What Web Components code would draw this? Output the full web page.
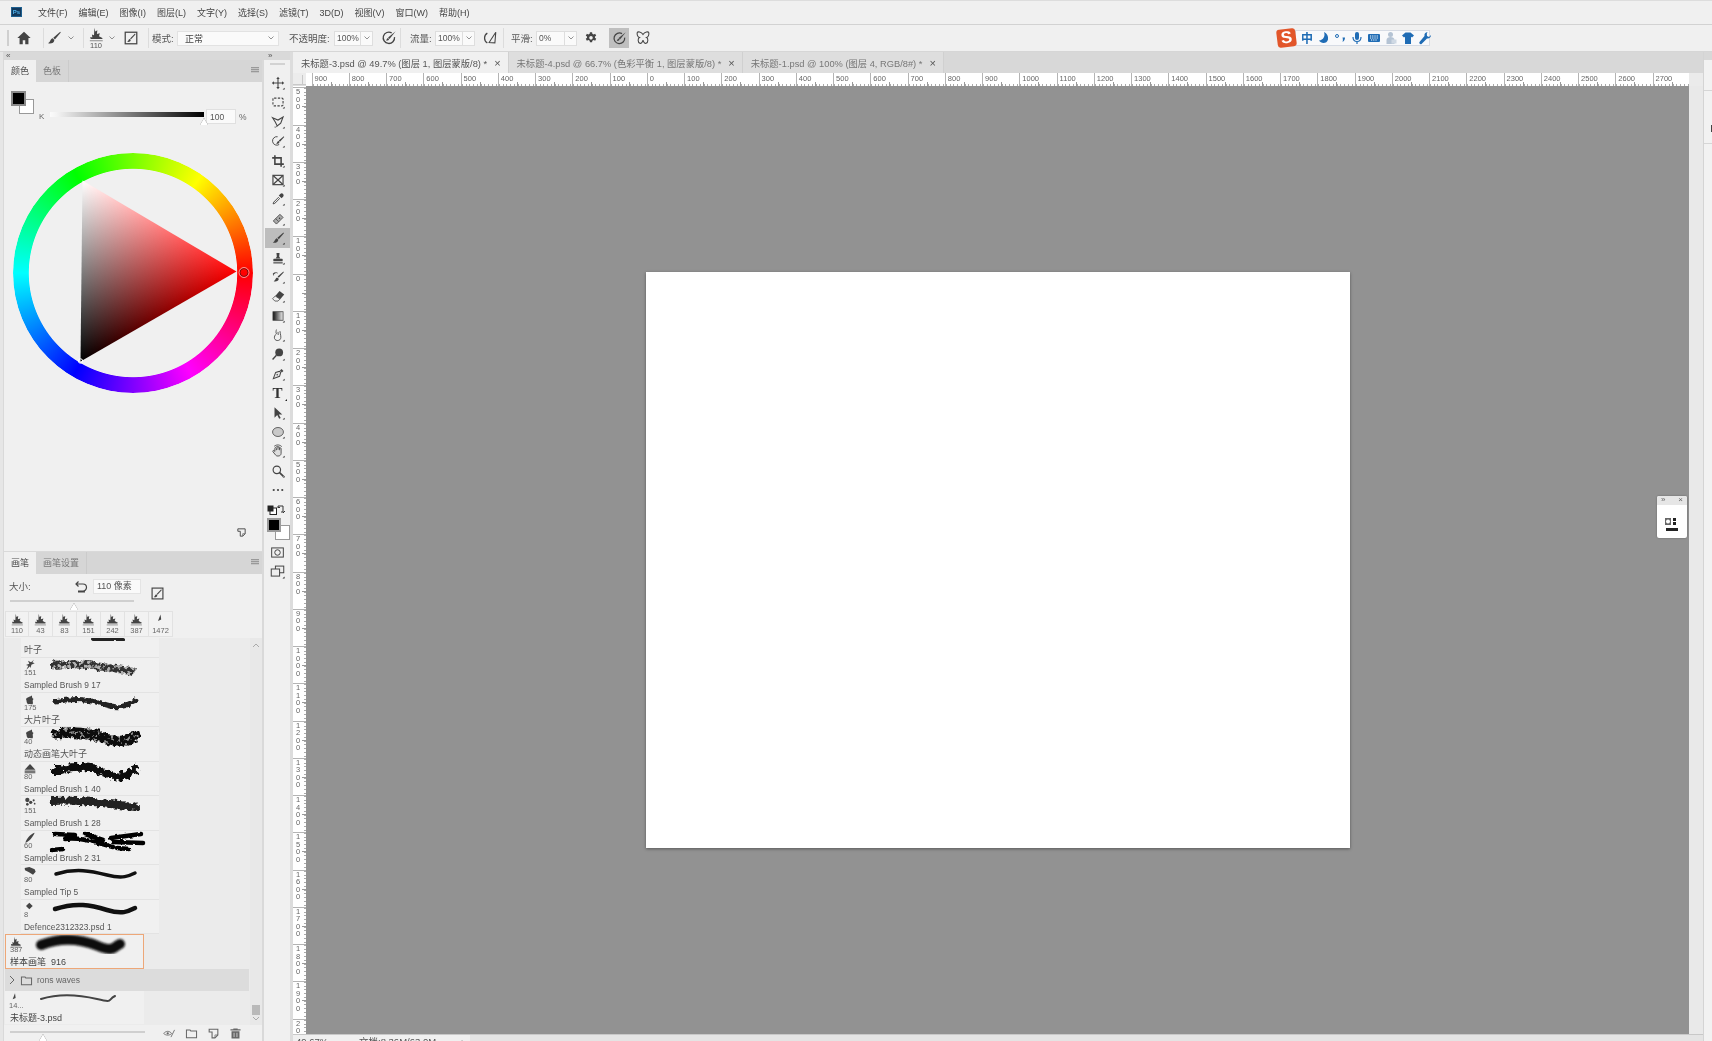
<!DOCTYPE html>
<html lang="zh">
<head>
<meta charset="utf-8">
<title>Photoshop</title>
<style>
    html, body { margin: 0; height: 100%; overflow: hidden; background: #f0f0f0; }
    body { font: 9.5px "Liberation Sans", "Noto Sans CJK SC", sans-serif; color: #555; }
</style>
</head>
<body>
<ps-app>
    <ps-menubar slot="menu">
        <span>文件(F)</span><span>编辑(E)</span><span>图像(I)</span><span>图层(L)</span><span>文字(Y)</span><span>选择(S)</span><span>滤镜(T)</span><span>3D(D)</span><span>视图(V)</span><span>窗口(W)</span><span>帮助(H)</span>
    </ps-menubar>
    <ps-options slot="options"></ps-options>
    <ps-left-dock slot="left">
        <ps-color-panel></ps-color-panel>
        <ps-brush-panel>
            <ps-brush-row indent partial label="叶子" stroke="M42 0 C48 3 60 -2 72 1" w="4" c="#222" rough="3"></ps-brush-row>
            <ps-brush-row indent tip="spark" size="151" label="Sampled Brush 9 17" stroke="M4 6 C25 3 50 8 80 12" w="8" c="#333" rough="6" holes></ps-brush-row>
            <ps-brush-row indent tip="leaf" size="175" label="大片叶子" stroke="M4 8 C25 3 40 6 56 11 S78 9 84 7" w="5" c="#222" rough="5"></ps-brush-row>
            <ps-brush-row indent tip="leaf" size="40" label="动态画笔大叶子" stroke="M5 6 C25 3 40 5 56 11 S78 10 84 8" w="11" c="#111" rough="7" holes dense></ps-brush-row>
            <ps-brush-row indent tip="peak" size="80" label="Sampled Brush 1 40" stroke="M5 8 C25 1 40 3 54 10 S78 12 84 5" w="8" c="#111" rough="9"></ps-brush-row>
            <ps-brush-row indent tip="dots" size="151" label="Sampled Brush 1 28" stroke="M3 4 C25 2 50 6 84 10" w="8" c="#222" rough="8"></ps-brush-row>
            <ps-brush-row indent tip="blade" size="60" label="Sampled Brush 2 31" stroke="M4 2 L24 3 M14 7 C28 5 44 10 62 15 M34 2 L52 8 M60 6 L90 2 M62 10 L92 11 M1 18 L12 17 M66 16 L78 17" w="4.5" c="#000" rough="3"></ps-brush-row>
            <ps-brush-row indent tip="tilt" size="80" label="Sampled Tip 5" stroke="M5 8 C25 2 40 5 56 9 S78 10 84 7" w="3.5" c="#111"></ps-brush-row>
            <ps-brush-row indent tip="diamond" size="8" label="Defence2312323.psd 1" stroke="M4 8 C25 1 40 4 56 9 S78 10 84 7" w="4.5" c="#111"></ps-brush-row>
            <ps-brush-row selected tip="tree" size="387" label="样本画笔  916" stroke="M5 9 C25 1 45 3 62 10 S78 10 84 8" w="10" c="#0c0c0c" soft></ps-brush-row>
            <ps-brush-folder>rons waves</ps-brush-folder>
            <ps-brush-row plain tip="tiny" size="14..." label="未标题-3.psd" stroke="M6 7 C25 1 45 3 62 7 S72 8 80 4" w="2" c="#444"></ps-brush-row>
        </ps-brush-panel>
    </ps-left-dock>
    <ps-toolbar slot="tools"></ps-toolbar>
    <ps-doc-area slot="doc">
        <ps-tab active>未标题-3.psd @ 49.7% (图层 1, 图层蒙版/8) *</ps-tab>
        <ps-tab>未标题-4.psd @ 66.7% (色彩平衡 1, 图层蒙版/8) *</ps-tab>
        <ps-tab>未标题-1.psd @ 100% (图层 4, RGB/8#) *</ps-tab>
        <ps-float slot="float"></ps-float>
    </ps-doc-area>
    <ps-right-strip slot="right"></ps-right-strip>
</ps-app>
<ps-sogou></ps-sogou>

<script>
const ICONS = {
    home: '<path d="M9 2 1.5 9H4v7h3.6v-4.5h2.8V16H14V9h2.5z"/>',
    brush: '<path d="M16 2 8.2 8.6l1.8 2L16.6 2.8z"/><path d="M7.6 9.4c-2.6.4-2.4 4-5.2 5.6 3.4.9 7-.6 7-3.8z"/>',
    toggle: '<rect x="2.5" y="2.5" width="13" height="13" fill="none" stroke="currentColor" stroke-width="1.4"/><path d="M13.5 4 8 9.5l1 1L14 5z"/><path d="M7.5 10c-1.6.3-1 2.4-3 3.4 2 .5 4.4-.2 4.2-2.3z"/>',
    radial: '<path d="M12 3.2A6.4 6.4 0 1 0 15.2 8" fill="none" stroke="currentColor" stroke-width="1.5"/><path d="M16.5 1.5 8 8.5l1.6 1.6z"/><path d="M7.8 9c-1.400.3-1 2-2.300 2.800 1.800.4 3.500-.2 3.500-1.800z"/>',
    airflow: '<path d="M6 3.5a6.4 6.4 0 0 0 0 11" fill="none" stroke="currentColor" stroke-width="1.4"/><path d="M15.5 2.5 8 14l6.5.5z" fill="none" stroke="currentColor" stroke-width="1.2"/>',
    gear: '<path d="M7.6 1.5h2.8l.3 2 1.7.9 1.9-.8 1.4 2.4-1.6 1.2v1.6l1.6 1.2-1.4 2.4-1.9-.8-1.7.9-.3 2H7.6l-.3-2-1.7-.9-1.9.8-1.4-2.4 1.6-1.2V7.2L2.3 6l1.4-2.4 1.9.8 1.7-.9zM9 6.5a2.2 2.2 0 1 0 0 4.6 2.2 2.2 0 0 0 0-4.6z" fill-rule="evenodd"/>',
    butterfly: '<path d="M9 5C7 2 3 1.500 2.500 3c-.5 2 .5 5 2.500 5.500C3 9.500 3 14 5.500 15c1.500.5 3-1.500 3.500-3.500.5 2 2 4 3.500 3.500 2.500-1 2.500-5.500.5-6.500 2-.5 3-3.500 2.500-5.500C15 1.500 11 2 9 5z" fill="none" stroke="currentColor" stroke-width="1.2"/>',
    move: '<path d="M9 1 6.800 3.800h1.500v4.500H3.800V6.800L1 9l2.800 2.200V9.700h4.500v4.500H6.800L9 17l2.200-2.800H9.700V9.700h4.500v1.500L17 9l-2.800-2.200v1.500H9.700V3.800h1.500z"/>',
    marquee: '<rect x="2.500" y="4" width="13" height="10" rx="1.500" fill="none" stroke="currentColor" stroke-width="1.400" stroke-dasharray="3 1.800"/>',
    lasso: '<path d="M2 3.500 9 6.500 15.500 2.500 12.500 10.500 8 14 5.500 9z" fill="none" stroke="currentColor" stroke-width="1.400"/><path d="M8 14c-1 1.500-2.500 2-3.500 1.500" fill="none" stroke="currentColor"/>',
    quick: '<path d="M8.500 3.500a5.500 5.500 0 1 0 2 10" fill="none" stroke="currentColor" stroke-width="1.200"/><path d="M16.500 3 10 8.500l1.500 1.500L17 4z"/><path d="M9.500 9c-1.800.5-1.300 2.500-3 3.500 2.500.5 4.500-.5 4.500-2.500z"/>',
    crop: '<path d="M5 1.500v11.500h11.500M1.500 5H13v11.500" fill="none" stroke="currentColor" stroke-width="2"/>',
    frame: '<rect x="2.500" y="3" width="13" height="12" fill="none" stroke="currentColor" stroke-width="1.500"/><path d="m3 3.500 12 11M15 3.500l-12 11" stroke="currentColor" stroke-width="1.500"/>',
    dropper: '<path d="M12 2.500c1-1 2.500-1 3.500 0s1 2.500 0 3.500l-2 2-3.500-3.500z"/><path d="M10 6.500 3.500 13l-.8 2.300 2.300-.8 6.500-6.500" fill="none" stroke="currentColor" stroke-width="1.200"/>',
    heal: '<path d="m3 11.500 8.500-8.500 4 4L7 15.500z" fill="#aaa" stroke="currentColor" stroke-width="1.100"/><path d="m6 8.500 4 4" stroke="currentColor"/><circle cx="11" cy="8" r=".9" fill="#333"/>',
    stamp: '<path d="M7 2.500h4l-.5 4.500 1.500 2.500H6l1.500-2.500z"/><rect x="3" y="10" width="12" height="3.200" rx=".8"/><rect x="3" y="14.500" width="12" height="1.500"/>',
    history: '<path d="M16 2 8.500 8.500l1.500 1.500L16.500 3z"/><path d="M8 9.500c-2.500.5-2 3.500-4.500 5 3 .8 6.500-.5 6.500-3.300z"/><path d="M3 4.500c2-1.500 4-1.500 5.500-.5M3 4.500l.3 2.500M3 4.500l2.500.2" fill="none" stroke="currentColor" stroke-width="1.100"/>',
    eraser: '<path d="M11 2.500 17 7l-5.500 6.500-6-4.500z"/><path d="M5.500 9 2 12.500l3 3h4l2.500-2.500z" fill="#eee" stroke="currentColor"/>',
    gradient: '<defs><linearGradient id="g"><stop stop-color="#111"/><stop offset="1" stop-color="#eee"/></linearGradient></defs><rect x="2.500" y="3.500" width="13" height="11" fill="url(#g)" stroke="currentColor"/>',
    smudge: '<path d="M7 2c-.5 2-1 4 0 5.500-2 1.500-3 3.500-2.500 6 .5 2 3 3 5 2.500 3-.5 3.500-3.500 3-6L12 7l-.5-3M9 5l.3 4" fill="none" stroke="currentColor" stroke-width="1.100"/>',
    dodge: '<circle cx="10.500" cy="7" r="5"/><path d="M7 10.500 2 16" stroke="currentColor" stroke-width="1.800"/>',
    pen: '<path d="M13.500 2.500 16 5l-2 2-2.500-2.500z"/><path d="M11 5.500 6 7 3 15l8-3 1.500-5z" fill="#e4e4e4" stroke="currentColor" stroke-width="1.300"/><circle cx="8" cy="10" r="1"/>',
    select: '<path d="M4.500 1.500v13.500l3.500-3.300 2.500 4.800 2-1-2.500-4.700h4.500z"/>',
    ellipse: '<ellipse cx="9" cy="9" rx="7" ry="5.800" fill="#c9c9c9" stroke="currentColor"/>',
    hand: '<path d="M5 9V5.500c0-1.500 2-1.500 2 0V8m0-4c0-1.500 2-1.500 2 0v3.500m0-3c0-1.500 2-1.500 2 0V8m0-2c0-1.500 2-1.500 2 0v6c0 2-1.500 3.500-4 3.500-2 0-3-.8-4-2.500L2.500 10c-.8-1.500 1-2.500 2-1.200L5 10" fill="#ddd" stroke="currentColor" stroke-width="1.100"/><path d="M4 3c3-2.500 7-2.500 10 .5" fill="none" stroke="currentColor"/>',
    zoom: '<circle cx="7.500" cy="7.500" r="4.800" fill="none" stroke="currentColor" stroke-width="1.500"/><path d="m11 11 5 5" stroke="currentColor" stroke-width="2.200"/>',
    dots: '<circle cx="3.500" cy="9" r="1.400"/><circle cx="9" cy="9" r="1.400"/><circle cx="14.500" cy="9" r="1.400"/>',
    mask: '<rect x="2" y="3.500" width="14" height="11" fill="none" stroke="currentColor" stroke-width="1.200"/><circle cx="9" cy="9" r="3.300" fill="none" stroke="currentColor" stroke-width="1.200"/>',
    screen: '<rect x="6.500" y="2.500" width="10" height="8" fill="#eee" stroke="currentColor" stroke-width="1.200"/><rect x="1.500" y="6" width="10" height="8.500" fill="#eee" stroke="currentColor" stroke-width="1.200"/>',
    tree: '<path d="M6.500 1 7.500 5.500 10 4 9.500 8.500 13 7.500 12 11l4.500 2.500-1 1H2L1.500 12l2.500.5L3.500 9 6 10z"/><path d="M1 16.500h15.500" stroke="#777" stroke-width="1"/>',
    spark: '<path d="M15 1 10.500 5 6 2.500 8 7 3 9l3.500 1-3 6 5.500-5 1 3 1-5.500 5-2-3.500-1.500z"/>',
    leaf: '<path d="M12 1c.5 3-6 2-9 6.500 1.500 3 0 5 3 8 3-1.500 4.500 0 7 0 1.500-4-1.500-5.500 1.500-8-3-1.500-2.500-4-2.500-6.500z"/>',
    peak: '<path d="M9 1.500 1 10h16z"/><path d="M1 11h16v4.500H1z" fill="#777"/>',
    blade: '<path d="M16 1C10 3 4 9 2 16c6-2 11-8 14-15z"/>',
    tilt: '<path d="M1 3l7-1.500 8 3.500 1.500 3.500-4 4.500-6-3.500-6-3z"/>',
    diamond: '<path d="M8 2.500l5 5-5 5-5-5z"/>',
    tiny: '<path d="M9 2 5.500 11l4.500-2z"/>',
    dotsTip: '<circle cx="5" cy="4.500" r="3.200"/><circle cx="10" cy="8" r="2.500"/><circle cx="14.500" cy="5" r="1.600"/><circle cx="5" cy="11" r="2"/><circle cx="16" cy="10" r="1.300"/>',
    eye: '<path d="M1 9c3-4 8-4 11 0-3 3-8 3-11 0z" fill="none" stroke="currentColor" stroke-width="1.200"/><circle cx="6.500" cy="8.800" r="1.600"/><path d="m16 4-5 10" stroke="currentColor" stroke-width="1.200"/>',
    folder: '<path d="M2 4h5l1 1.500h8V15H2z" fill="none" stroke="currentColor" stroke-width="1.400"/>',
    newItem: '<path d="M3 3h12v8l-4 4H7V7H3z" fill="none" stroke="currentColor" stroke-width="1.500"/><path d="M11 15v-4h4" fill="none" stroke="currentColor"/>',
    trash: '<path d="M6 3V2h6v1h4v2H2V3zM3.500 6h11v10h-11z" fill-rule="evenodd"/><path d="M7 8v6M11 8v6" stroke="#eee"/>'
};
ICONS.dots2 = ICONS.dotsTip;

class PsIcon extends HTMLElement {
    constructor() {
        super();
        this.attachShadow({ mode: 'open' });
    }
    connectedCallback() {
        const name = this.getAttribute('name');
        const s = this.getAttribute('s') || 16;
        const corner = this.hasAttribute('corner') ? '<path d="M17.500 17.500h-2.500l2.500-2.500z" fill="#222"/>' : '';
        this.shadowRoot.innerHTML = `
            <style>
                :host { display: inline-flex; flex: none; width: ${s}px; height: ${s}px; color: #444; }
                svg { width: 100%; height: 100%; fill: currentColor; display: block; }
            </style>
            <svg viewBox="0 0 18 18">${ICONS[name] || ''}${corner}</svg>`;
    }
}
customElements.define('ps-icon', PsIcon);

class PsApp extends HTMLElement {
    constructor() {
        super();
        this.attachShadow({ mode: 'open' });
        this.shadowRoot.innerHTML = `
            <style>
                :host { display: flex; flex-direction: column; width: 1712px; height: 1041px; overflow: hidden; filter: blur(.35px); }
                .main { display: flex; height: 989px; padding-left: 3px; background: #e6e6e6; }
                ::slotted([slot="menu"]), ::slotted([slot="options"]) { flex: none; }
            </style>
            <slot name="menu"></slot>
            <slot name="options"></slot>
            <div class="main">
                <slot name="left"></slot>
                <slot name="tools"></slot>
                <slot name="doc"></slot>
                <slot name="right"></slot>
            </div>`;
    }
}
customElements.define('ps-app', PsApp);

class PsMenubar extends HTMLElement {
    constructor() {
        super();
        this.attachShadow({ mode: 'open' });
        this.shadowRoot.innerHTML = `
            <style>
                :host { display: flex; align-items: center; height: 24px; background: #f0f0f0; border-bottom: 1px solid #d2d2d2; box-shadow: inset 0 1px 0 #ddd; }
                .logo { width: 11px; height: 10px; margin: 0 16px 0 11px; background: #12395c; border: 1px solid #1d5f8f; box-sizing: border-box; color: #4fb2ec; font: bold 6px/8px "Liberation Sans", sans-serif; text-align: center; }
                .items { display: flex; align-items: baseline; gap: 11px; color: #454545; font-size: 9px; }
            </style>
            <div class="logo">Ps</div>
            <div class="items"><slot></slot></div>`;
    }
}
customElements.define('ps-menubar', PsMenubar);

class PsOptions extends HTMLElement {
    constructor() {
        super();
        this.attachShadow({ mode: 'open' });
        const chev = '<svg class="chev" viewBox="0 0 6 4"><path d="M.5.5 3 3 5.500.5" fill="none" stroke="#777" stroke-width=".8"/></svg>';
        const sep = m => `<i class="sep" style="margin-left:${m}px"></i>`;
        const num = (v, w, m) => `<div class="num" style="width:${w}px;margin-left:${m}px"><span>${v}</span><b>${chev}</b></div>`;
        const label = (t, w, m) => `<span class="lbl" style="width:${w}px;margin-left:${m}px">${t}</span>`;
        const icon = (n, m, s = 16) => `<ps-icon name="${n}" s="${s}" style="margin-left:${m}px"></ps-icon>`;
        this.shadowRoot.innerHTML = `
            <style>
                :host { display: flex; align-items: center; height: 26px; padding-left: 4px; background: #f0f0f0; border-bottom: 1px solid #d6d6d6; color: #555; font-size: 9.5px; }
                .grip { width: 2px; height: 16px; background: #cfcfcf; margin-left: 3px; }
                .sep { width: 1px; height: 20px; background: #dcdcdc; flex: none; }
                .chev { width: 6px; height: 4px; display: block; flex: none; }
                .lbl { flex: none; white-space: nowrap; }
                .preset { display: flex; flex-direction: column; align-items: center; width: 20px; margin-left: 2px; font-size: 7.5px; line-height: 8px; }
                .select { display: flex; align-items: center; justify-content: space-between; box-sizing: border-box; width: 102px; height: 15px; margin-left: 4px; padding: 0 4px 0 7px; background: #fafafa; border: 1px solid #e2e2e2; color: #444; font-size: 9px; }
                .num { display: flex; align-items: stretch; box-sizing: border-box; height: 15px; background: #fafafa; border: 1px solid #dedede; font-size: 8.5px; line-height: 13px; flex: none; }
                .num span { flex: 1; padding-left: 2px; }
                .num b { display: flex; align-items: center; justify-content: center; width: 11px; border-left: 1px solid #dedede; }
                .on { display: flex; align-items: center; justify-content: center; width: 20px; height: 20px; margin-left: 11px; background: #bfbfbf; }
            </style>
            <i class="grip"></i>
            ${icon('home', 7)}
            ${sep(11)}
            ${icon('brush', 2)}
            <span style="margin-left:6px">${chev}</span>
            ${sep(9)}
            <div class="preset"><ps-icon name="tree" s="15"></ps-icon><span>110</span></div>
            <span style="margin-left:3px">${chev}</span>
            ${icon('toggle', 8)}
            ${sep(9)}
            ${label('模式:', 21, 3)}
            <div class="select"><span>正常</span>${chev}</div>
            ${label('不透明度:', 40, 10)}
            ${num('100%', 39, 5)}
            ${icon('radial', 8)}
            ${sep(3)}
            ${label('流量:', 20, 9)}
            ${num('100%', 40, 5)}
            ${icon('airflow', 7)}
            ${sep(5)}
            ${label('平滑:', 20, 7)}
            ${num('0%', 41, 5)}
            ${icon('gear', 7, 14)}
            <div class="on"><ps-icon name="radial" s="15"></ps-icon></div>
            ${icon('butterfly', 6)}`;
    }
}
customElements.define('ps-options', PsOptions);

class PsSogou extends HTMLElement {
    constructor() {
        super();
        this.attachShadow({ mode: 'open' });
        const blue = '#1f6cb5';
        this.shadowRoot.innerHTML = `
            <style>
                :host { position: absolute; left: 1277px; top: 29px; display: flex; align-items: center; height: 18px; filter: blur(.35px); }
                .s { width: 19px; height: 18px; border-radius: 3px; background: #e2562a; transform: rotate(-7deg); color: #fff; font: bold 17px/18px "Liberation Sans", sans-serif; text-align: center; z-index: 1; }
                .bar { display: flex; align-items: center; gap: 3px; width: 135px; height: 16px; margin-left: -1px; padding-left: 5px; box-sizing: border-box; background: #f8f9fb; border: 1px solid #d6dbe4; color: ${blue}; }
                .zh { width: 14px; font: bold 12px/14px "Noto Sans CJK SC", sans-serif; text-align: center; }
                svg { width: 14px; height: 14px; fill: ${blue}; flex: none; }
            </style>
            <div class="s">S</div>
            <div class="bar">
                <span class="zh">中</span>
                <svg viewBox="0 0 14 14"><path d="M8 1c1.500 4-.5 8-5 8.500C5 13 11 13 12 8.500 12.500 5 11 2.500 8 1z"/></svg>
                <svg viewBox="0 0 14 14"><circle cx="4" cy="5" r="1.500" fill="none" stroke="${blue}"/><path d="M9.500 6.500h2.500c0 2.500-1 3.500-2.500 4.500.5-1.500.5-2.500 0-4.500z"/></svg>
                <svg viewBox="0 0 14 14"><rect x="5" y="1" width="4" height="8" rx="2"/><path d="M3 6c0 6 8 6 8 0M7 10v3" fill="none" stroke="${blue}" stroke-width="1.200"/></svg>
                <svg viewBox="0 0 14 14"><rect x="1" y="3" width="12" height="8" rx="1"/><path d="M3 5h8M3 7h8M4 9h6" stroke="#fff" stroke-dasharray="1 .8" fill="none"/></svg>
                <svg viewBox="0 0 14 14" style="fill:#b4c3d4"><circle cx="6.500" cy="3.500" r="2.500"/><path d="M2.500 13V9c0-4 8-4 8 0v4z"/><rect x="7.500" y="8.500" width="5" height="4" fill="#cfd9e4"/></svg>
                <svg viewBox="0 0 14 14"><path d="M4.500 1.500h5l3.500 3-2 2-1-.8V13H4V5.700l-1 .8-2-2z"/></svg>
                <svg viewBox="0 0 14 14"><path d="M9.500 1c-2 .2-3.500 2-3 4L1.500 11c-.8 1.200.8 2.800 2 2L9 7.500c2 .5 4-1 4-3.500L11 6 9 5l-.2-2.200z"/></svg>
            </div>`;
    }
}
customElements.define('ps-sogou', PsSogou);

class PsLeftDock extends HTMLElement {
    constructor() {
        super();
        this.attachShadow({ mode: 'open' });
        this.shadowRoot.innerHTML = `
            <style>
                :host { display: flex; flex-direction: column; flex: none; box-sizing: border-box; width: 260px; height: 989px; padding: 0 1px; background: #d9d9d9; }
                .strip { height: 8px; font-size: 8px; line-height: 7px; color: #555; padding-left: 2px; }
            </style>
            <div class="strip">«</div>
            <slot></slot>`;
    }
}
customElements.define('ps-left-dock', PsLeftDock);

class PsPanelTabs extends HTMLElement {
    constructor() {
        super();
        this.attachShadow({ mode: 'open' });
    }
    connectedCallback() {
        const tabs = this.getAttribute('tabs').split(',');
        this.shadowRoot.innerHTML = `
            <style>
                :host { display: flex; align-items: stretch; flex: none; height: 22px; background: #d6d6d6; font-size: 9px; color: #777; }
                .tab { display: flex; align-items: center; padding: 0 7px 2px; border-right: 1px solid #cbcbcb; }
                .tab.on { background: #f0f0f0; color: #4a4a4a; border-right: 0; }
                .menu { margin: 7px 3px 0 auto; width: 8px; height: 6px; background: repeating-linear-gradient(#999 0 1px, #c4c4c4 1px 2px); }
            </style>
            ${tabs.map((t, i) => `<div class="tab ${i ? '' : 'on'}">${t}</div>`).join('')}
            <div class="menu"></div>`;
    }
}
customElements.define('ps-panel-tabs', PsPanelTabs);

class PsWheel extends HTMLElement {
    constructor() {
        super();
        this.attachShadow({ mode: 'open' });
        this.shadowRoot.innerHTML = `
            <style>
                :host { display: block; position: relative; width: 240px; height: 240px; }
                .ring { position: absolute; inset: 0; border-radius: 50%;
                    background: conic-gradient(from 90deg, #f00, #f0f 60deg, #00f 120deg, #0ff 180deg, #0f0 240deg, #ff0 305deg, #f00 360deg);
                    -webkit-mask: radial-gradient(circle closest-side, transparent 86.5%, #000 87.2%);
                    mask: radial-gradient(circle closest-side, transparent 86.5%, #000 87.2%); }
                svg { position: absolute; inset: 0; width: 240px; height: 240px; }
            </style>
            <div class="ring"></div>
            <svg viewBox="0 0 240 240">
                <defs>
                    <clipPath id="tri"><polygon points="69.500,27.500 67.500,208.500 223.500,118.500"/></clipPath>
                    <linearGradient id="r" gradientUnits="userSpaceOnUse" x1="223.500" y1="118.500" x2="68.500" y2="118.500">
                        <stop stop-color="#f00"/><stop offset="1" stop-color="#f00" stop-opacity="0"/>
                    </linearGradient>
                    <linearGradient id="w" gradientUnits="userSpaceOnUse" x1="69.500" y1="27.500" x2="147.300" y2="162.500">
                        <stop stop-color="#fff"/><stop offset="1" stop-color="#fff" stop-opacity="0"/>
                    </linearGradient>
                </defs>
                <g clip-path="url(#tri)" style="isolation:isolate">
                    <rect x="60" y="20" width="170" height="195" fill="#000"/>
                    <rect x="60" y="20" width="170" height="195" fill="url(#r)" style="mix-blend-mode:plus-lighter"/>
                    <rect x="60" y="20" width="170" height="195" fill="url(#w)" style="mix-blend-mode:plus-lighter"/>
                </g>
                <circle cx="231" cy="119.500" r="4" fill="none" stroke="#7a1010" stroke-width="1"/>
                <circle cx="231" cy="119.500" r="5" fill="none" stroke="#fff" stroke-width=".8" opacity=".7"/>
                <circle cx="67.500" cy="208" r="2.200" fill="none" stroke="#fff" stroke-width="1"/>
            </svg>`;
    }
}
customElements.define('ps-wheel', PsWheel);

class PsColorPanel extends HTMLElement {
    constructor() {
        super();
        this.attachShadow({ mode: 'open' });
        this.shadowRoot.innerHTML = `
            <style>
                :host { display: flex; flex-direction: column; flex: none; height: 491px; background: #f0f0f0; margin-bottom: 1px; }
                .body { display: flex; flex-direction: column; flex: 1; }
                .top { display: flex; align-items: flex-start; height: 71px; padding: 9px 0 0 7px; box-sizing: border-box; }
                .swatch { position: relative; width: 23px; height: 23px; flex: none; }
                .bg { position: absolute; right: 0; bottom: 0; width: 15px; height: 15px; background: #fff; border: 1px solid #999; box-sizing: border-box; }
                .fg { position: absolute; left: 0; top: 0; width: 15px; height: 15px; background: #000; border: 2px solid #8a8a8a; box-sizing: border-box; }
                .k { margin: 21px 0 0 5px; width: 11px; color: #666; font-size: 8px; }
                .slider { position: relative; width: 154px; height: 5px; margin: 21px 2px 0 0; background: linear-gradient(to right, #fbfbfb 0, #f4f4f4 4%, #000 100%); }
                .thumb { position: absolute; right: -4px; top: 6px; width: 0; height: 0; border: 4px solid transparent; border-bottom: 7px solid #fff; border-top: 0; filter: drop-shadow(0 0 .7px #444); }
                .val { width: 30px; height: 15px; margin-top: 18px; box-sizing: border-box; background: #fafafa; border: 1px solid #e0e0e0; font-size: 8.5px; line-height: 14px; padding-left: 3px; color: #555; }
                .pct { margin: 21px 0 0 3px; font-size: 8.5px; color: #666; }
                ps-wheel { margin-left: 9px; }
                .corner { margin: auto 15px 13px auto; }
            </style>
            <ps-panel-tabs tabs="颜色,色板"></ps-panel-tabs>
            <div class="body">
                <div class="top">
                    <div class="swatch"><div class="bg"></div><div class="fg"></div></div>
                    <span class="k">K</span>
                    <div class="slider"><div class="thumb"></div></div>
                    <div class="val">100</div>
                    <span class="pct">%</span>
                </div>
                <ps-wheel></ps-wheel>
                <ps-icon class="corner" name="newItem" s="11"></ps-icon>
            </div>`;
    }
}
customElements.define('ps-color-panel', PsColorPanel);

class PsBrushRow extends HTMLElement {
    constructor() {
        super();
        this.attachShadow({ mode: 'open' });
    }
    connectedCallback() {
        const a = n => this.getAttribute(n);
        const has = n => this.hasAttribute(n);
        const rough = +a('rough') || 0;
        const seed = (a('label').length * 7) % 50;
        let filter = '';
        if (has('soft')) {
            filter = '<filter id="f" x="-10%" y="-50%" width="120%" height="200%"><feGaussianBlur stdDeviation=".9"/></filter>';
        } else if (rough) {
            // rough edge from a displacement; "holes" keeps a grey under layer with dark blotches on top
            const under = has('dense') ? '.22' : '.35';
            const cut = has('dense') ? '-2.700' : '-3.600';
            const holes = has('holes')
                ? `<feColorMatrix in="d" type="matrix" values="1 0 0 0 ${under} 0 1 0 0 ${under} 0 0 1 0 ${under} 0 0 0 .85 0" result="under"/>
                   <feTurbulence type="fractalNoise" baseFrequency=".3" numOctaves="2" seed="${seed + 3}" result="n"/>
                   <feColorMatrix in="n" type="matrix" values="0 0 0 0 0 0 0 0 0 0 0 0 0 0 0 0 0 0 9 ${cut}" result="m"/>
                   <feComposite in="d" in2="m" operator="in" result="top"/>
                   <feMerge><feMergeNode in="under"/><feMergeNode in="top"/></feMerge>`
                : '';
            filter = `<filter id="f" x="-10%" y="-60%" width="120%" height="220%">
                <feTurbulence type="fractalNoise" baseFrequency=".22" numOctaves="3" seed="${seed}"/>
                <feDisplacementMap in="SourceGraphic" scale="${rough}" xChannelSelector="R" yChannelSelector="G" result="d"/>
                ${holes}</filter>`;
        }
        const left = has('selected') || has('plain');
        const tipName = a('tip') === 'dots' ? 'dots2' : a('tip');
        const cjk = /[\u4e00-\u9fff]/.test(a('label'));
        this.shadowRoot.innerHTML = `
            <style>
                :host { display: block; box-sizing: border-box; flex: none; position: relative;
                    width: ${has('indent') ? 138 : 139}px; height: ${has('partial') ? 20 : has('selected') ? 35 : has('plain') ? 33 : 34.5}px;
                    margin-left: ${has('indent') ? 16 : 0}px; background: #f0f0f0;
                    border-bottom: ${has('indent') ? '1px solid #e3e3e3' : '0'};
                    ${has('selected') ? 'border: 1px solid #eda778;' : ''} color: #555; overflow: hidden; }
                .wrap { display: flex; height: ${has('partial') ? 7 : 22}px; }
                .tip { display: flex; flex-direction: column; align-items: flex-start; flex: none; width: 30px; padding: 1px 0 0 ${left ? 4 : 3}px; box-sizing: border-box; font-size: 7.5px; line-height: 9px; color: #666; }
                .tip .g { height: 9px; }
                svg.s { flex: none; width: 100px; height: 20px; overflow: visible; margin-top: 1px; }
                .label { padding-left: ${has('selected') ? 4 : has('plain') ? 5 : 3}px; white-space: pre; font-size: ${cjk ? 9 : 8.4}px; line-height: 11px; color: ${left ? '#444' : '#555'}; letter-spacing: ${cjk ? 0 : '.05px'}; }
            </style>
            <div class="wrap">
                <div class="tip"><div class="g">${a('tip') ? `<ps-icon name="${tipName}" s="12"></ps-icon>` : ''}</div><span>${a('size') || ''}</span></div>
                <svg class="s" viewBox="0 0 100 20"><defs>${filter}</defs>
                    <path d="${a('stroke')}" fill="none" stroke="${a('c')}" stroke-width="${a('w')}" stroke-linecap="round" ${filter ? 'filter="url(#f)"' : ''}/>
                </svg>
            </div>
            <div class="label">${a('label')}</div>`;
    }
}
customElements.define('ps-brush-row', PsBrushRow);

class PsBrushFolder extends HTMLElement {
    constructor() {
        super();
        this.attachShadow({ mode: 'open' });
        this.shadowRoot.innerHTML = `
            <style>
                :host { display: flex; align-items: center; flex: none; height: 22px; width: 244px; background: #dcdcdc; color: #666; font-size: 8.500px; }
                svg { width: 6px; height: 10px; margin: 0 5px 0 4px; }
                ps-icon { margin-right: 4px; color: #666; }
            </style>
            <svg viewBox="0 0 6 10"><path d="m1 1 4 4-4 4" fill="none" stroke="#666"/></svg>
            <ps-icon name="folder" s="13"></ps-icon>
            <slot></slot>`;
    }
}
customElements.define('ps-brush-folder', PsBrushFolder);

class PsBrushPanel extends HTMLElement {
    constructor() {
        super();
        this.attachShadow({ mode: 'open' });
        const sizes = ['110', '43', '83', '151', '242', '387', '1472'];
        this.shadowRoot.innerHTML = `
            <style>
                :host { display: flex; flex-direction: column; flex: 1; min-height: 0; background: #f0f0f0; overflow: hidden; }
                .size { display: flex; align-items: flex-start; flex: none; height: 37px; box-sizing: border-box; padding: 5px 0 0 5px; position: relative; }
                .size .t { width: 66px; line-height: 15px; font-size: 9.500px; color: #555; }
                .in { width: 48px; height: 15px; box-sizing: border-box; margin-left: 5px; padding-left: 3px; background: #fafafa; border: 1px solid #e4e4e4; font-size: 9px; line-height: 13px; }
                .track { position: absolute; left: 6px; top: 26px; width: 124px; height: 2px; background: #cfcfcf; }
                .thumb { position: absolute; left: 60px; top: 3px; border: 4px solid transparent; border-bottom: 7px solid #fff; border-top: 0; filter: drop-shadow(0 0 .7px #444); }
                .presets { display: flex; flex: none; height: 26px; margin-left: 1px; }
                .presets div { display: flex; flex-direction: column; align-items: center; box-sizing: border-box; width: 24px; border: 1px solid #e2e2e2; border-left-width: 0; background: #f2f2f2; font-size: 7.500px; line-height: 9px; color: #666; padding-top: 1px; }
                .presets div:first-child { border-left-width: 1px; }
                .list { display: flex; flex: none; height: 387px; margin-top: 1px; background: #ebebeb; }
                .rows { display: flex; flex-direction: column; flex: 1; overflow: hidden; padding-left: 1px; }
                .scroll { display: flex; flex-direction: column; align-items: center; width: 12px; flex: none; background: #e8e8e8; position: relative; }
                .scroll svg { width: 8px; height: 5px; margin-top: 5px; }
                .scroll i { display: block; width: 8px; height: 10px; background: #b9b9b9; margin-top: auto; }
                .scroll svg:last-child { margin: 1px 0 4px; }
                .foot { display: flex; align-items: flex-start; position: relative; height: 15px; flex: none; padding: 2px 0 0 159px; box-sizing: border-box; gap: 9px; }
                .foot ps-icon { color: #666; }
                .foot .track { top: 6px; width: 135px; }
                .foot .thumb { left: 29px; }
            </style>
            <ps-panel-tabs tabs="画笔,画笔设置"></ps-panel-tabs>
            <div class="size">
                <span class="t">大小:</span>
                <svg width="13" height="13" viewBox="0 0 13 13" style="margin-top:1px"><path d="M3.500 1.500 1 4l2.500 2.500M1.500 4H8a3 3 0 0 1 0 7H3M3 12h7" fill="none" stroke="#444" stroke-width="1.200"/></svg>
                <div class="in">110 像素</div>
                <ps-icon name="toggle" s="15" style="margin:7px 0 0 9px"></ps-icon>
                <div class="track"><div class="thumb"></div></div>
            </div>
            <div class="presets">
                ${sizes.map((s, i) => `<div><ps-icon name="${i < 6 ? 'tree' : 'tiny'}" s="13"></ps-icon>${s}</div>`).join('')}
            </div>
            <div class="list">
                <div class="rows"><slot></slot></div>
                <div class="scroll">
                    <svg viewBox="0 0 8 5"><path d="m1 4 3-3 3 3" fill="none" stroke="#aaa"/></svg>
                    <i></i>
                    <svg viewBox="0 0 8 5"><path d="m1 1 3 3 3-3" fill="none" stroke="#aaa"/></svg>
                </div>
            </div>
            <div class="foot">
                <div class="track"><div class="thumb"></div></div>
                <ps-icon name="eye" s="13"></ps-icon>
                <ps-icon name="folder" s="13"></ps-icon>
                <ps-icon name="newItem" s="13"></ps-icon>
                <ps-icon name="trash" s="13"></ps-icon>
            </div>`;
    }
}
customElements.define('ps-brush-panel', PsBrushPanel);

class PsToolbar extends HTMLElement {
    constructor() {
        super();
        this.attachShadow({ mode: 'open' });
        const tools = ['move', 'marquee', 'lasso', 'quick', 'crop', 'frame', 'dropper', 'heal', 'brush', 'stamp', 'history', 'eraser', 'gradient', 'smudge', 'dodge', 'pen', 'T', 'select', 'ellipse', 'hand', 'zoom', 'dots'];
        this.shadowRoot.innerHTML = `
            <style>
                :host { display: flex; flex-direction: column; align-items: stretch; flex: none; box-sizing: border-box; width: 30px; height: 989px; margin: 0; padding: 0 0 0 1px; background: #f0f0f0; border-right: 3px solid #dcdcdc; border-left: 1px solid #d9d9d9; }
                .strip { height: 8px; margin-left: -1px; background: #d9d9d9; font-size: 8px; line-height: 7px; padding-left: 4px; color: #555; flex: none; }
                .grip { flex: none; height: 13.300px; display: flex; align-items: center; justify-content: center; }
                .grip i { width: 15px; height: 2px; background: #d2d2d2; margin-top: -6px; }
                .tool { flex: none; display: flex; align-items: center; justify-content: center; height: 19.400px; }
                .tool.on { background: #bdbdbd; }
                .t { width: 16px; text-align: center; font: bold 15px/16px "Liberation Serif", serif; color: #333; }
                .tool .wrap { display: flex; width: 18px; justify-content: center; position: relative; }
                .mini { position: absolute; right: 0; bottom: 0; border: 1px solid transparent; border-right-color: #222; border-bottom-color: #222; }
                .swap { flex: none; display: flex; justify-content: space-between; margin: 3px 1px 0 2px; height: 14px; align-items: center; padding-right: 3px; }
                .colors { position: relative; flex: none; width: 23px; height: 22px; margin: 1px 0 0 2px; }
                .colors .b { position: absolute; right: 0; bottom: 0; width: 15px; height: 15px; background: #fff; border: 1px solid #999; box-sizing: border-box; }
                .colors .f { position: absolute; left: 0; top: 0; width: 14px; height: 14px; background: #000; border: 2px solid #9a9a9a; box-sizing: border-box; }
                .mode { flex: none; display: flex; justify-content: center; margin-top: 5px; }
            </style>
            <div class="strip">»</div>
            <div class="grip"><i></i></div>
            ${tools.map(t => `
                <div class="tool ${t === 'brush' ? 'on' : ''}">
                    ${t === 'T'
                        ? '<div class="wrap"><span class="t">T</span><i class="mini"></i></div>'
                        : `<div class="wrap"><ps-icon name="${t}" s="14" ${t === 'dots' ? '' : 'corner'}></ps-icon></div>`}
                </div>`).join('')}
            <div class="swap">
                <svg width="10" height="10" viewBox="0 0 10 10"><rect x="3" y="3" width="6.500" height="6.500" fill="#fff" stroke="#222"/><rect x=".5" y=".5" width="6" height="6" fill="#222"/></svg>
                <svg width="9" height="9" viewBox="0 0 9 9"><path d="M1 3V1h5v6H4m2 1 2-2M1 3l1-1 1 1" fill="none" stroke="#333"/></svg>
            </div>
            <div class="colors"><div class="b"></div><div class="f"></div></div>
            <div class="mode"><ps-icon name="mask" s="15"></ps-icon></div>
            <div class="mode" style="margin-top:4px"><ps-icon name="screen" s="15" corner></ps-icon></div>`;
    }
}
customElements.define('ps-toolbar', PsToolbar);

class PsTab extends HTMLElement {
    constructor() {
        super();
        this.attachShadow({ mode: 'open' });
        this.shadowRoot.innerHTML = `
            <style>
                :host { display: flex; align-items: center; flex: none; gap: 7px; padding: 0 7px 0 8px; background: #dedede; color: #777; font-size: 9.300px; white-space: nowrap; border-right: 1px solid #d0d0d0; }
                :host([active]) { background: #f0f0f0; color: #555; }
                b { font-weight: 400; font-size: 11px; color: #555; }
            </style>
            <slot></slot><b>×</b>`;
    }
}
customElements.define('ps-tab', PsTab);

class PsRuler extends HTMLElement {
    constructor() {
        super();
        this.attachShadow({ mode: 'open' });
    }
    connectedCallback() {
        const vertical = this.getAttribute('dir') === 'v';
        const from = +this.getAttribute('from');
        const to = +this.getAttribute('to');
        let cells = '';
        for (let v = from; v <= to; v += 100) cells += `<div class="c">${Math.abs(v)}</div>`;
        this.shadowRoot.innerHTML = `
            <style>
                :host { display: flex; overflow: hidden; background: #fff; color: #666; font-size: 7.500px;
                    flex-direction: ${vertical ? 'column' : 'row'};
                    ${vertical ? 'padding-top: 1.250px;' : 'padding-left: 5.600px;'} box-sizing: border-box; }
                .c { flex: none; box-sizing: border-box; }
                ${vertical ? `
                .c { height: 37.250px; width: 13px; padding: 0 4px 0 3px; line-height: 7.500px; word-break: break-all; border-top: 1px solid #b4b4b4;
                    background:
                        repeating-linear-gradient(to bottom, #aaa 0 1px, transparent 1px 3.725px) right top / 2px 100% no-repeat,
                        linear-gradient(#999, #999) right 18px / 4px 1px no-repeat; }` : `
                .c { width: 37.250px; height: 13px; padding: 1px 0 0 2px; line-height: 9px; border-left: 1px solid #b4b4b4;
                    background:
                        repeating-linear-gradient(to right, #aaa 0 1px, transparent 1px 3.725px) left bottom / 100% 2px no-repeat,
                        linear-gradient(#999, #999) 18px bottom / 1px 4px no-repeat; }`}
            </style>
            ${cells}`;
    }
}
customElements.define('ps-ruler', PsRuler);

class PsFloat extends HTMLElement {
    constructor() {
        super();
        this.attachShadow({ mode: 'open' });
        this.shadowRoot.innerHTML = `
            <style>
                :host { position: absolute; right: 2px; top: 410px; display: flex; flex-direction: column; width: 30px; height: 42px; background: #fff; border-radius: 2px; box-shadow: 0 0 2px rgba(0,0,0,.35); overflow: hidden; color: #666; }
                .h { display: flex; justify-content: space-between; height: 9px; padding: 0 4px; background: #e6e6e6; font-size: 8px; line-height: 8px; }
                svg { width: 14px; height: 17px; margin: 12px auto 0; display: block; }
            </style>
            <div class="h"><span>»</span><span>×</span></div>
            <svg viewBox="0 0 14 17"><rect width="6" height="7" y="1" fill="#666"/><circle cx="3" cy="4.500" r="2" fill="#fff"/><rect x="8" y="1" width="3" height="3" fill="#222"/><rect x="8" y="5" width="3" height="3" fill="#222"/><rect x="1" y="11" width="12" height="3" fill="#222"/></svg>`;
    }
}
customElements.define('ps-float', PsFloat);

class PsDocArea extends HTMLElement {
    constructor() {
        super();
        this.attachShadow({ mode: 'open' });
        this.shadowRoot.innerHTML = `
            <style>
                :host { display: grid; flex: none; width: 1410px; height: 989px; grid-template-columns: 13px 1383px 14px; grid-template-rows: 21px 13px 948px 7px; background: #e9e9e9; }
                .tabs { grid-column: 1 / -1; display: flex; background: #d8d8d8; }
                .corner { background: linear-gradient(#c8c8c8, #c8c8c8) 9px 2px / 1px 9px no-repeat, linear-gradient(#c8c8c8, #c8c8c8) 0 11px / 13px 1px no-repeat, #ececec; box-shadow: inset 0 -1px 0 #ddd; }
                .canvas { position: relative; display: flex; align-items: center; justify-content: center; background: #929292; overflow: hidden; }
                .doc { width: 704px; height: 576px; background: #fff; box-shadow: 0 1px 3px rgba(0,0,0,.4); }
                .gutter-top { background: #ebebeb; }
                .status { grid-column: 1 / -1; display: flex; background: #f0f0f0; overflow: hidden; line-height: 14px; color: #555; font-size: 9.500px; padding-left: 3px; border-top: 1px solid #c8c8c8; box-sizing: border-box; }
                .status span:first-child { width: 63px; }
                .status span:nth-child(2) { width: 102px; }
                .status i { flex: 1; margin-left: 6px; background: #e4e4e4; }
            </style>
            <div class="tabs"><slot></slot></div>
            <div class="corner"></div>
            <ps-ruler dir="h" from="-900" to="2700"></ps-ruler>
            <div class="gutter-top"></div>
            <ps-ruler dir="v" from="-500" to="2000"></ps-ruler>
            <div class="canvas">
                <div class="doc"></div>
                <slot name="float"></slot>
            </div>
            <div></div>
            <div class="status"><span>49.67%</span><span>文档:8.36M/63.0M</span><span>›</span><i></i></div>`;
    }
}
customElements.define('ps-doc-area', PsDocArea);

class PsRightStrip extends HTMLElement {
    constructor() {
        super();
        this.attachShadow({ mode: 'open' });
        this.shadowRoot.innerHTML = `
            <style>
                :host { display: flex; flex-direction: column; flex: none; width: 9px; height: 989px; background: #f2f2f2; border-left: 1px solid #d4d4d4; box-sizing: border-box; }
                .a { height: 8px; background: #d8d8d8; }
                .b { height: 30px; border-bottom: 1px solid #d6d6d6; }
                .c { height: 52px; border-bottom: 1px solid #d6d6d6; position: relative; }
                .c i { position: absolute; right: 0; top: 34px; width: 1px; height: 7px; background: #444; }
            </style>
            <div class="a"></div><div class="b"></div><div class="c"><i></i></div>`;
    }
}
customElements.define('ps-right-strip', PsRightStrip);
</script>
</body>
</html>
